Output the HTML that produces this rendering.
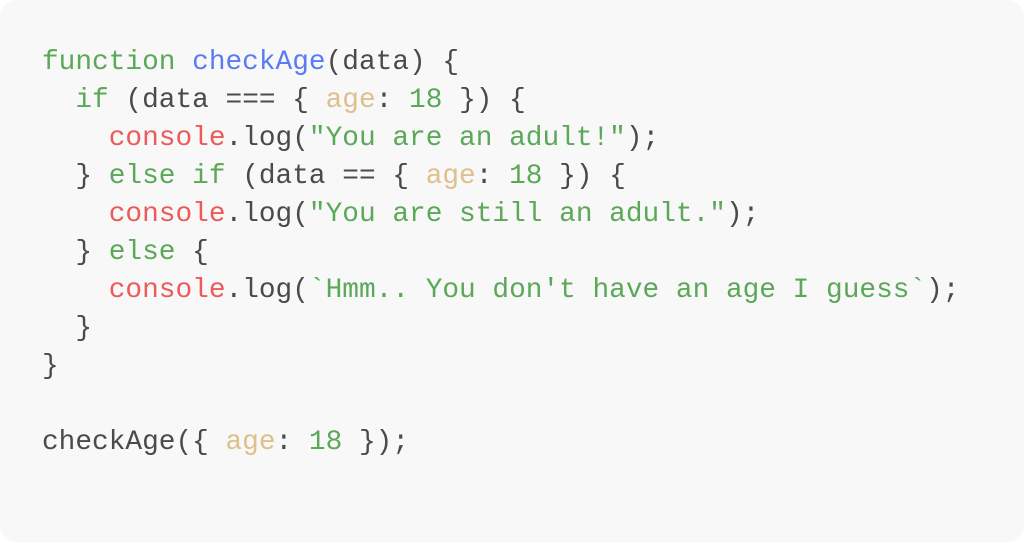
<!DOCTYPE html>
<html><head><style>
html,body{margin:0;padding:0;background:#fff;width:1024px;height:542px;overflow:hidden}
.box{position:absolute;left:0;top:0;width:1024px;height:542px;background:#f8f8f8;border-radius:16px}
pre{position:absolute;left:42px;top:44px;margin:0;font-family:"Courier New","Liberation Mono",monospace;font-size:27.8px;line-height:38px;color:#4a4a4a}
.k{color:#5aa858}.f{color:#5a7cf2}.r{color:#ec5a5a}.p{color:#ddc08c}.s{color:#5aa858}.n{color:#5aa858}
</style></head><body><div class="box"></div>
<pre><span class="k">function</span> <span class="f">checkAge</span>(data) {
  <span class="k">if</span> (data === { <span class="p">age</span>: <span class="n">18</span> }) {
    <span class="r">console</span>.log(<span class="s">"You are an adult!"</span>);
  } <span class="k">else if</span> (data == { <span class="p">age</span>: <span class="n">18</span> }) {
    <span class="r">console</span>.log(<span class="s">"You are still an adult."</span>);
  } <span class="k">else</span> {
    <span class="r">console</span>.log(<span class="s">`Hmm.. You don't have an age I guess`</span>);
  }
}

checkAge({ <span class="p">age</span>: <span class="n">18</span> });</pre>
</body></html>
